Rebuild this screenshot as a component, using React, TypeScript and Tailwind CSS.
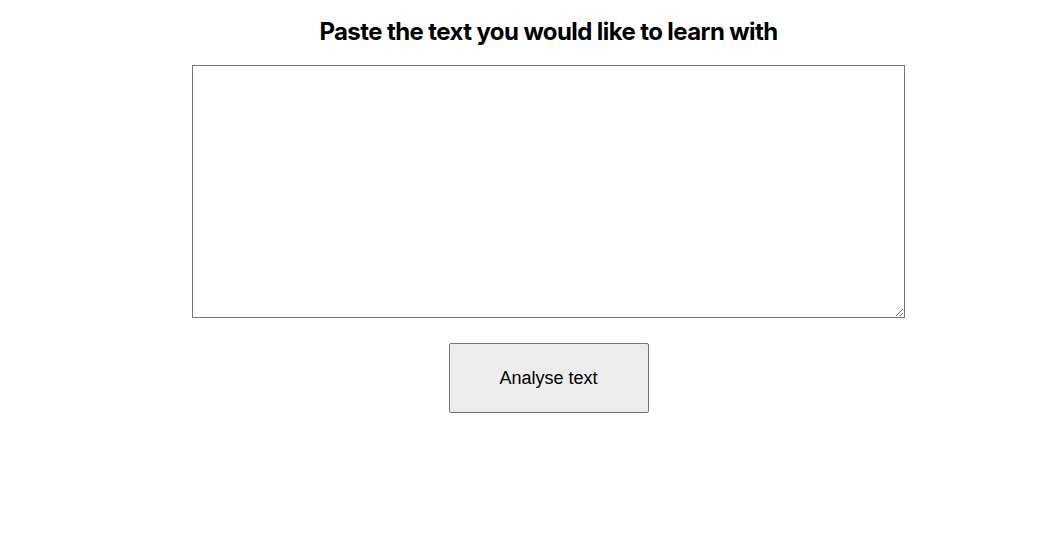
export default function App() {
  return (
    <div className="min-h-screen bg-white pl-[33px]">
      <div className="flex flex-col items-center pt-4">
        <h1 className="text-2xl leading-8 font-bold tracking-tight text-black font-['Inter',sans-serif]">
          Paste the text you would like to learn with
        </h1>
        <textarea className="mt-[17px] h-[253px] w-[713px] border border-[#767676] bg-white font-['Liberation_Mono',monospace] text-sm" />
        <button className="mt-[25px] h-[70px] w-[200px] rounded-[2px] border border-[#767676] bg-[#ececec] text-lg text-black font-['Liberation_Sans',Arial,sans-serif]">
          Analyse text
        </button>
      </div>
    </div>
  );
}
